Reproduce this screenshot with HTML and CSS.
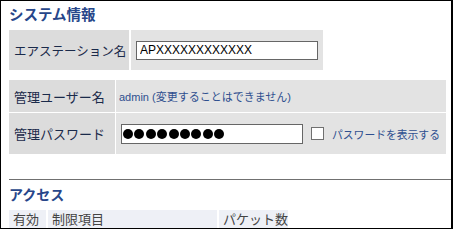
FILE: index.html
```html
<!DOCTYPE html>
<html lang="ja">
<head>
<meta charset="utf-8">
<title>システム情報</title>
<link rel="stylesheet" href="styles.css">
</head>
<body>
<div class="frame">
  <h2 class="section-title">システム情報</h2>
  <div class="grid grid-ap">
    <div class="cell label">エアステーション名</div>
    <div class="cell value"><input class="text-field" type="text" value="APXXXXXXXXXXXX"></div>
  </div>
  <div class="grid grid-admin">
    <div class="cell label">管理ユーザー名</div>
    <div class="cell value"><span class="note">admin (変更することはできません)</span></div>
    <div class="cell label">管理パスワード</div>
    <div class="cell value pw-row">
      <div class="pw-field"><span class="dot"></span><span class="dot"></span><span class="dot"></span><span class="dot"></span><span class="dot"></span><span class="dot"></span><span class="dot"></span><span class="dot"></span><span class="dot"></span></div>
      <input class="check" type="checkbox" id="showpw">
      <label class="note show-label" for="showpw">パスワードを表示する</label>
    </div>
  </div>
  <hr class="rule">
  <h2 class="section-title title-access">アクセス</h2>
  <div class="head-row">
    <div class="head-cell">有効</div>
    <div class="head-cell">制限項目</div>
    <div class="head-cell">パケット数</div>
  </div>
</div>
</body>
</html>
```

FILE: styles.css
```css
* { box-sizing: border-box; }
html, body { margin: 0; padding: 0; background: #fff; }
body { font-family: "Liberation Sans", "Noto Sans CJK JP", sans-serif; }

.frame {
  width: 453px;
  height: 229px;
  border: 1px solid #000;
  border-right-width: 2px;
  padding: 3px 0 0 8px;
  overflow: hidden;
  background: #fff;
}

.section-title {
  margin: 0;
  height: 20px;
  line-height: 20px;
  font-size: 14.5px;
  font-weight: bold;
  color: #27468a;
  font-family: "Noto Sans CJK JP", sans-serif;
}

.title-access { margin-top: 4px; font-size: 14px; }

.grid { display: grid; }

.grid-ap {
  margin-top: 6px;
  grid-template-columns: 120px 192px;
  grid-template-rows: 40px;
  column-gap: 2px;
}

.grid-admin {
  margin-top: 10px;
  grid-template-columns: 106px 330px;
  grid-template-rows: 32px 41px;
  gap: 1px;
}

.cell {
  display: flex;
  align-items: center;
  font-family: "Noto Sans CJK JP", sans-serif;
}

.label {
  background: #dcdcdc;
  padding-left: 5px;
  font-size: 12.5px;
  color: #1a2a4a;
}

.grid-admin .label { font-size: 13px; }

.value {
  background: #e3e3e3;
  padding-left: 5px;
}

.grid-admin .value { padding-left: 3px; }

.text-field {
  width: 182px;
  height: 19px;
  margin: 0;
  border: 1px solid #666;
  padding: 0 0 0 3px;
  font-family: "Liberation Sans", sans-serif;
  font-size: 12px;
  color: #000;
  background: #fff;
  outline: none;
}

.note {
  font-family: "Liberation Sans", "Noto Sans CJK JP", sans-serif;
  font-size: 11px;
  color: #2f4f8f;
}

.grid-admin .pw-row { padding-left: 5px; }

.pw-field {
  width: 182px;
  height: 20px;
  border: 1px solid #666;
  background: #fff;
  display: flex;
  align-items: center;
  gap: 1.4px;
  padding-left: 1px;
}

.dot {
  width: 10px;
  height: 10px;
  border-radius: 50%;
  background: #000;
}

.check {
  appearance: none;
  -webkit-appearance: none;
  width: 13px;
  height: 13px;
  margin: 0 0 0 8px;
  border: 1px solid #707070;
  background: #fff;
}

.show-label {
  margin-left: 8px;
  font-size: 10.8px;
}

.rule {
  margin: 25px 0 0 0;
  border: 0;
  height: 1px;
  background: #707070;
}

.head-row {
  margin-top: 6px;
  display: grid;
  grid-template-columns: 37px 169px 69px;
  column-gap: 2px;
  height: 20px;
}

.head-cell {
  background: #eef0f6;
  font-family: "Noto Sans CJK JP", sans-serif;
  font-size: 13px;
  line-height: 17px;
  color: #444;
  padding-left: 4px;
}
```
